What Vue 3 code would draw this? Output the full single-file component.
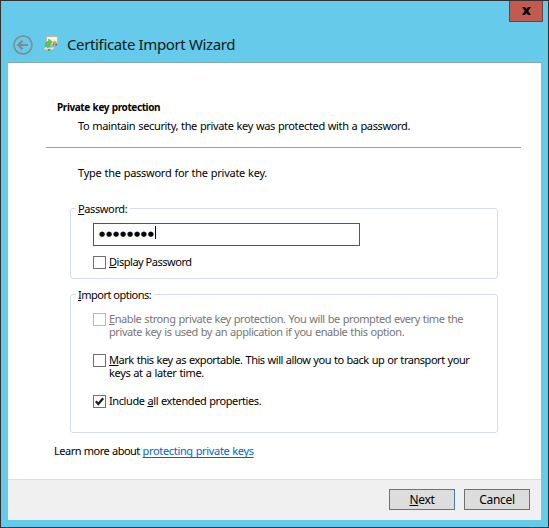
<script setup>
import { ref } from 'vue'
const password = ref('●●●●●●●●')
</script>

<template>
  <div class="window">
    <header>
      <div class="controls">
        <button class="close" aria-label="Close">
          <svg width="9" height="8" viewBox="0 0 9 8"><path d="M0 0h3l1.5 2L6 0h3L6.2 4 9 8H6L4.5 6 3 8H0l2.8-4z" /></svg>
        </button>
      </div>
      <div class="titlebar">
        <svg class="back" width="20" height="20" viewBox="0 0 20 20" fill="none" stroke="#7d8a90">
          <circle cx="10" cy="10" r="9" stroke-width="1.5" />
          <path d="M15 10H6M9.500 5.800 5.300 10l4.200 4.200" stroke-width="2.200" />
        </svg>
        <svg class="cert" width="17" height="17" viewBox="0 0 17 17">
          <path d="M4.500 1.500h11v8h-11z" fill="#f6f0e6" stroke="#c4b59f" stroke-width=".9" />
          <path d="M6 3.500h8M7 5.500h4" stroke="#fffdf8" />
          <path d="M.7 14.500 4 11.500l9.500.5-3 3-5 .8z" fill="#eef1ef" stroke="#8c9a98" stroke-width=".7" />
          <path d="M3 14l6 .2M5 12.500l5.500.3" stroke="#aab4b2" stroke-width=".7" />
          <path d="M3.500 11c-.2-3 1.500-4.500 3.200-5V4L10.500 7 7.500 10 7 8.500C6 9 6.200 10.500 7.500 11.800L5 12.500z" fill="#4fd04a" stroke="#2aa53f" stroke-width=".5" />
          <path d="M5.500 14h3.200l-1 2H6z" fill="#38b54a" />
          <circle cx="12.800" cy="7.500" r="1.800" fill="#f5a51b" />
          <path d="M10.800 8.200h1.500v2h-1.500z" fill="#d56a22" /><path d="M13.500 8.500H15v2h-1.500z" fill="#3565b5" />
        </svg>
        <h1>Certificate Import Wizard</h1>
      </div>
    </header>

    <main>
      <section class="intro">
        <h2>Private key protection</h2>
        <p class="sub">To maintain security, the private key was protected with a password.</p>
      </section>
      <p class="prompt">Type the password for the private key.</p>

      <section class="group password">
        <div class="legend"><span class="pw-label"><u>P</u>assword:</span></div>
        <div class="field"><span class="dots">{{ password }}</span><i class="caret"></i></div>
        <label class="option"><span class="box"></span><span class="text t-display"><u>D</u>isplay Password</span></label>
      </section>

      <section class="group import">
        <div class="legend"><span class="im-label"><u>I</u>mport options:</span></div>
        <label class="option disabled">
          <span class="box"></span>
          <span class="text"><span class="line t-enable"><u>E</u>nable strong private key protection. You will be prompted every time the</span><span class="line t-enable">private key is used by an application if you enable this option.</span></span>
        </label>
        <label class="option">
          <span class="box"></span>
          <span class="text"><span class="line t-mark1"><u>M</u>ark this key as exportable. This will allow you to back up or transport your</span><span class="line t-mark2">keys at a later time.</span></span>
        </label>
        <label class="option">
          <span class="box"><svg width="11" height="11" viewBox="0 0 11 11"><path d="M1.800 5.300 4.300 8 9.200 2.200" fill="none" stroke="#222" stroke-width="2.300" /></svg></span>
          <span class="text t-include">Include <u>a</u>ll extended properties.</span>
        </label>
      </section>

      <p class="learn">Learn more about <a>protecting private keys</a></p>
    </main>

    <footer>
      <button class="btn primary"><span><u>N</u>ext</span></button>
      <button class="btn"><span>Cancel</span></button>
    </footer>
  </div>
</template>

<style>
body { margin: 0; overflow: hidden; }
</style>

<style scoped>
* { box-sizing: border-box; }
h1, h2, p { margin: 0; font-weight: normal; }
button { margin: 0; padding: 0; font: inherit; color: inherit; border-radius: 0; }
.window {
  width: 549px; height: 528px; padding: 0 7px 7px; display: flex; flex-direction: column;
  background: #66caea; border: 1px solid #333336;
  font: 11px/13px "Noto Sans", "Open Sans", sans-serif; color: #000; white-space: nowrap;
}
header { height: 61px; flex: none; }
.controls { display: flex; justify-content: flex-end; height: 21px; margin-right: -2px; }
.close {
  width: 34px; height: 21px; display: flex; align-items: center; justify-content: center;
  background: #c35a50; border: 1px solid #713f42; border-top: 0;
}
.titlebar { display: flex; align-items: center; height: 24px; margin-top: 11px; padding-left: 5px; }
.cert { margin-left: 9px; margin-top: -3px; }
h1 { margin: -2px 0 0 8px; font-size: 15px; line-height: 22px; color: #101b20; letter-spacing: -.36px; }

main { flex: 1; background: #fff; border-top: 1px solid #7eaabc; display: flex; flex-direction: column; }
.intro { margin: 38px 20px 0 38px; height: 47px; padding-left: 11px; border-bottom: 1px solid #a0a0a0; }
h2 { font-size: 10px; line-height: 13px; font-weight: bold; letter-spacing: -.4px; word-spacing: .5px; }
.sub { margin: 5px 0 0 21px; letter-spacing: -.36px; word-spacing: .5px; }
.prompt { margin: 18px 0 0 70px; letter-spacing: -.26px; word-spacing: .4px; }
.group { position: relative; margin-left: 62px; width: 428px; border: 1px solid #d5dfe5; border-radius: 3px; }
.group.password { margin-top: 29px; height: 71px; padding: 14px 0 0 22px; }
.group.import { margin-top: 15px; height: 139px; padding: 18px 0 0 22px; }
.legend { position: absolute; left: 5px; top: -7px; height: 14px; padding: 0 3px 0 2px; background: #fff; line-height: 13px; }
.pw-label { letter-spacing: -.38px; }
.im-label { letter-spacing: -.5px; }
.field { display: flex; align-items: flex-start; width: 267px; height: 23px; padding: 2px 0 0 5px; border: 1px solid #2a628f; }
.dots { font: 7px/16px "DejaVu Sans", sans-serif; letter-spacing: .87px; }
.caret { width: 1px; height: 13px; background: #000; }
.option { display: flex; align-items: flex-start; }
.password .option { margin-top: 10px; }
.import .option { height: 41px; }
.box { flex: none; width: 13px; height: 13px; margin-right: 3px; border: 1px solid #707070; background: #fff; }
.box svg { display: block; }
.text { margin-top: -1px; }
.line { display: block; height: 13px; }
.t-display { letter-spacing: -.47px; }
.t-enable { letter-spacing: -.42px; word-spacing: .5px; }
.t-mark1 { letter-spacing: -.46px; word-spacing: .5px; }
.t-include { letter-spacing: -.4px; word-spacing: .4px; }
.t-mark2 { letter-spacing: -.36px; word-spacing: .5px; }
.disabled { color: #767676; }
.disabled .box { border-color: #b8b8b8; }
u { text-decoration: underline; text-decoration-thickness: 1px; text-underline-offset: 1px; }
.learn { margin: 11px 0 0 46px; letter-spacing: -.5px; word-spacing: .4px; }
a { color: #0066cc; letter-spacing: -.34px; text-decoration: underline; text-decoration-skip-ink: none; text-underline-offset: 2px; }

footer {
  height: 41px; flex: none; display: flex; gap: 9px; justify-content: flex-end; padding: 9px 11px 0;
  background: #f0f0f0; border-top: 1px solid #dfdfdf;
}
.btn { width: 66px; height: 21px; background: #ddd; border: 1px solid #707070; font-size: 12px; line-height: 15px; letter-spacing: -.3px; }
.btn.primary { border-color: #3c7fb1; }
</style>
